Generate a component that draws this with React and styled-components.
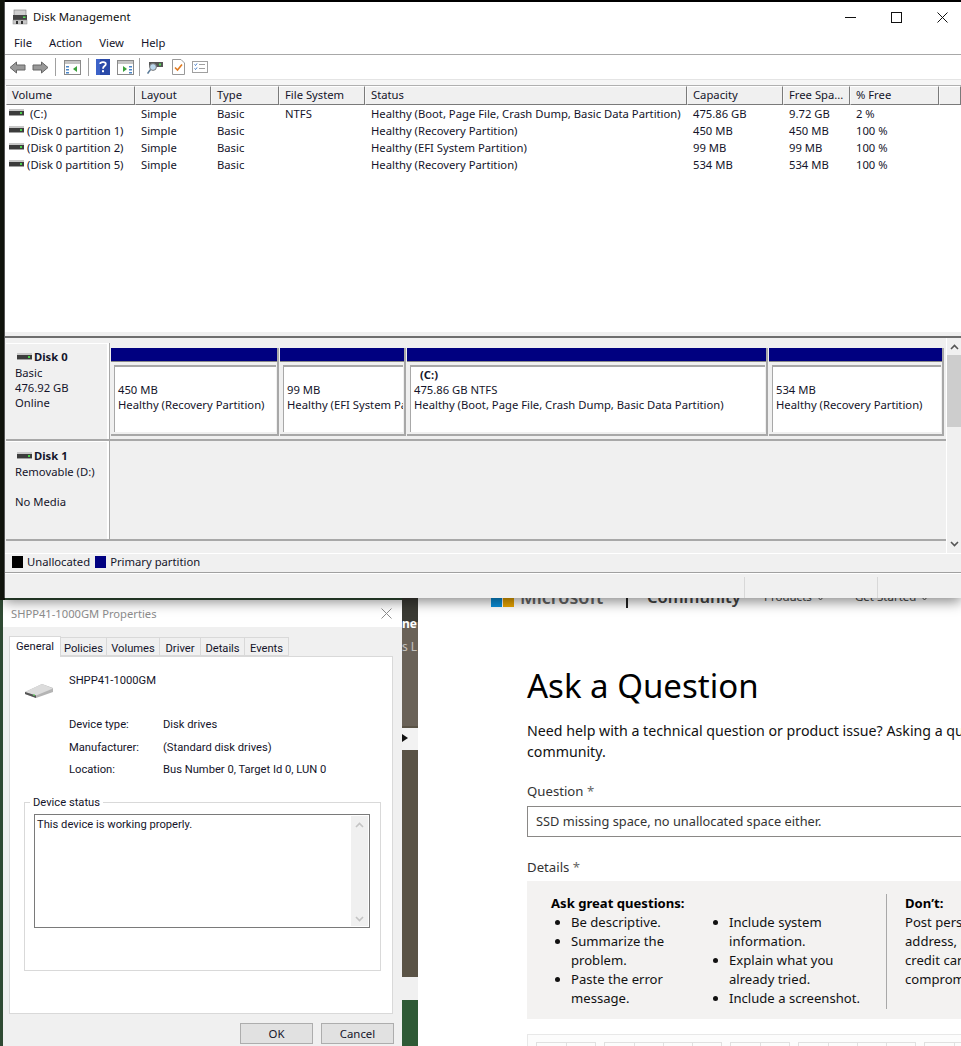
import styled, { createGlobalStyle } from 'styled-components';

const Global = createGlobalStyle`
    html, body { margin: 0; padding: 0; background: #2c3d2c; }
    * { box-sizing: border-box; }
`;

const Desktop = styled.div`
    position: relative;
    width: 961px;
    height: 1046px;
    overflow: hidden;
    background: #2f4a33;
    font-family: "Noto Sans", sans-serif;
    color: #1a1a2a;
`;

const TopStrip = styled.div`
    position: absolute;
    inset: 0 0 auto 0;
    height: 3px;
    background: #000;
`;

const LeftStrip = styled.div`
    position: absolute;
    left: 0;
    top: 0;
    width: 5px;
    height: 600px;
    background: #14180f;
`;

const Photo = styled.div`
    position: absolute;
    left: 402px;
    top: 598px;
    width: 16px;
    height: 448px;
    background: #5a5346;
    color: #fff;
    overflow: hidden;
    font-size: 12px;
`;

const PhotoLabel = styled.span`
    position: absolute;
    left: 0;
    top: ${(p) => p.$top}px;
    font-weight: ${(p) => (p.$bold ? 700 : 400)};
    opacity: ${(p) => (p.$bold ? 1 : 0.6)};
    white-space: nowrap;
`;

const PhotoBand = styled.div`
    position: absolute;
    left: 0;
    right: 0;
    top: ${(p) => p.$top}px;
    height: ${(p) => p.$height}px;
    background: ${(p) => p.$color};
`;

const PhotoArrow = styled.div`
    position: absolute;
    left: 0;
    top: 136px;
    border-left: 6px solid #111;
    border-top: 4px solid transparent;
    border-bottom: 4px solid transparent;
`;

/* disk management window */
const MainWindow = styled.div`
    position: absolute;
    left: 4px;
    top: 2px;
    width: 957px;
    height: 596px;
    background: #fff;
    display: flex;
    flex-direction: column;
    border-left: 1px solid #555;
    box-shadow: 0 4px 12px rgba(0, 0, 0, 0.45);
    font-size: 11.25px;
    z-index: 3;
`;

const TitleBar = styled.div`
    height: 31px;
    display: flex;
    align-items: center;
    flex-shrink: 0;
    padding: 0 0 1px 7px;
    margin-right: -4px;
`;

const TitleText = styled.span`
    color: #111;
    flex: 1;
    margin-left: 5px;
    font-size: 11.4px;
    position: relative;
    top: -1px;
`;

const WinButton = styled.div`
    width: 46px;
    height: 30px;
    display: flex;
    align-items: center;
    justify-content: center;
`;

const MenuBar = styled.div`
    height: 22px;
    flex-shrink: 0;
    display: flex;
    align-items: center;
    gap: 17px;
    padding: 0 0 3px 9px;
    border-bottom: 1px solid #a8a8a8;
    color: #14142a;
`;

const Toolbar = styled.div`
    height: 24px;
    flex-shrink: 0;
    display: flex;
    align-items: center;
    padding-left: 1px;
`;

const ToolButton = styled.div`
    width: ${(p) => p.$w || 22}px;
    height: 20px;
    display: flex;
    align-items: center;
    justify-content: center;
`;

const ToolSep = styled.div`
    width: 1px;
    height: 18px;
    margin: 0 3px;
    background: #a0a0a0;
`;

const ToolGap = styled.div`
    height: 6px;
    flex-shrink: 0;
    background: #f6f6f6;
    border-top: 1px solid #e4e4e4;
`;

const ListPane = styled.div`
    height: 246px;
    flex-shrink: 0;
    margin-left: 1px;
    background: #fff;
    border-top: 1px solid #b0b0b0;
`;

const columns = '129px 76px 68px 86px 322px 96px 67px 89px 1fr';

const HeaderRow = styled.div`
    display: grid;
    grid-template-columns: ${columns};
    height: 19px;
`;

const HeaderCell = styled.div`
    background: #f0f0f0;
    border: 1px solid;
    border-color: #fff #7a7a7a #7a7a7a #f8f8f8;
    padding-left: 5px;
    line-height: 16px;
    white-space: nowrap;
    overflow: hidden;
    color: #14142a;
`;

const ListRow = styled.div`
    display: grid;
    grid-template-columns: ${columns};
    height: 17px;
    line-height: 17px;
    color: #14142a;
    &:first-of-type { margin-top: 1px; }
`;

const ListCell = styled.div`
    padding-left: 6px;
    white-space: nowrap;
    overflow: hidden;
`;

const VolumeCell = styled(ListCell)`
    display: flex;
    align-items: flex-start;
    gap: 3px;
    padding-left: 3px;
    white-space: pre;
    svg { margin-top: 3px; }
`;

const Splitter = styled.div`
    height: 7px;
    flex-shrink: 0;
    background: #f0f0f0;
    border-top: 1px solid #fff;
    border-bottom: 2px solid #6e6e6e;
`;

const GraphPane = styled.div`
    height: 215px;
    flex-shrink: 0;
    background: #f0f0f0;
    display: flex;
    color: #14142a;
`;

const DiskList = styled.div`
    flex: 1;
    padding: 5px 0 0 1px;
    display: flex;
    flex-direction: column;
`;

const DiskRow = styled.div`
    display: flex;
    height: ${(p) => p.$h}px;
    border-bottom: 2px solid #a8a8a8;
`;

const DiskInfo = styled.div`
    width: 103px;
    flex-shrink: 0;
    padding: ${(p) => p.$pad}px 0 0 9px;
    line-height: 15px;
    border-right: 2px solid #fff;
    border-top: 1px solid #fff;
    box-shadow: 1px 0 0 #a8a8a8;
`;

const DiskName = styled.div`
    display: flex;
    align-items: center;
    gap: 2px;
    font-weight: 700;
    margin: -1px 0 1px 2px;
    height: 16px;
`;

const InfoLine = styled.div`
    min-height: 15px;
    white-space: nowrap;
`;

const Partitions = styled.div`
    flex: 1;
    display: flex;
    gap: 1px;
    padding: 5px 2px 0 2px;
`;

const Partition = styled.div`
    width: ${(p) => p.$w}px;
    flex-shrink: 0;
    height: 88px;
    display: flex;
    flex-direction: column;
    background: #f0f0f0;
    border-right: 2px solid #a8a8a8;
    border-bottom: 2px solid #a8a8a8;
`;

const PartitionHead = styled.div`
    height: 14px;
    background: #000080;
    border-bottom: 1px solid #888;
`;

const PartitionBody = styled.div`
    flex: 1;
    margin: 3px 1px 2px 3px;
    background: #fff;
    border-top: 2px solid #a8a8a8;
    border-left: 1px solid #a8a8a8;
    padding: ${(p) => (p.$named ? 0 : 15)}px 0 0 3px;
    line-height: 15px;
    overflow: hidden;
    white-space: nowrap;
`;

const PartitionName = styled.div`
    font-weight: 700;
    padding-left: 6px;
    height: 15px;
`;

const ScrollBar = styled.div`
    width: 15px;
    flex-shrink: 0;
    display: flex;
    flex-direction: column;
    align-items: center;
    background: #f0f0f0;
    padding: 6px 0 6px;
    border-left: 1px solid #fff;
`;

const ScrollThumb = styled.div`
    width: 100%;
    height: 72px;
    margin-top: 5px;
    background: #cdcdcd;
`;

const ScrollSpacer = styled.div`
    flex: 1;
`;

const Legend = styled.div`
    height: 20px;
    flex-shrink: 0;
    background: #f0f0f0;
    border-top: 1px solid #fff;
    border-bottom: 1px solid #a0a0a0;
    display: flex;
    align-items: center;
    padding: 0 0 3px 7px;
    color: #14142a;
`;

const Swatch = styled.span`
    width: 11px;
    height: 12px;
    margin-right: 4px;
    background: ${(p) => p.$color};
`;

const LegendLabel = styled.span`
    margin-right: 5px;
`;

const StatusBar = styled.div`
    flex: 1;
    background: #f0f0f0;
    border-top: 1px solid #fff;
    display: grid;
    grid-template-columns: 740px 133px 1fr;
    padding-top: 3px;
`;

const StatusCell = styled.div`
    border-right: 1px solid #d8d8d8;
    &:last-child { border-right: 0; }
`;

/* device properties dialog */
const Dialog = styled.div`
    position: absolute;
    left: 3px;
    top: 600px;
    width: 399px;
    height: 446px;
    background: #f0f0f0;
    display: flex;
    flex-direction: column;
    font-family: Roboto, sans-serif;
    font-size: 11.2px;
    color: #14142a;
    z-index: 2;
`;

const DialogTitle = styled.div`
    height: 27px;
    margin-bottom: 2px;
    background: #fff;
    display: flex;
    align-items: center;
    justify-content: space-between;
    padding: 0 10px 0 8px;
    color: #8c8c8c;
    font-family: "Noto Sans", sans-serif;
    font-size: 11.2px;
    flex-shrink: 0;
`;

const TabRow = styled.div`
    display: flex;
    align-items: flex-end;
    height: 27px;
    padding-left: 6px;
    flex-shrink: 0;
`;

const Tab = styled.div`
    width: ${(p) => p.$w}px;
    height: ${(p) => (p.$active ? 21 : 19)}px;
    text-align: center;
    line-height: ${(p) => (p.$active ? 19 : 21)}px;
    background: ${(p) => (p.$active ? '#fff' : '#f0f0f0')};
    border: 1px solid #d9d9d9;
    border-bottom: ${(p) => (p.$active ? '0' : '1px solid #d9d9d9')};
    border-left: ${(p) => (p.$active ? '1px solid #d9d9d9' : '0')};
    margin-bottom: ${(p) => (p.$active ? -1 : 0)}px;
    position: relative;
`;

const TabPanel = styled.div`
    height: 358px;
    margin: 0 9px 0 6px;
    background: #fff;
    border: 1px solid #d9d9d9;
    padding: 14px 11px 0 14px;
    flex-shrink: 0;
`;

const DeviceHead = styled.div`
    display: flex;
    height: 46px;
`;

const DeviceIcon = styled.div`
    width: 45px;
    padding-top: 12px;
`;

const DeviceName = styled.div`
    line-height: 15px;
    margin-top: 2px;
`;

const DeviceProps = styled.div`
    display: grid;
    grid-template-columns: 94px 1fr;
    grid-auto-rows: 22.5px;
    margin: 0 0 0 45px;
    line-height: 15px;
`;

const StatusGroup = styled.fieldset`
    margin: 11px 0 0 0;
    padding: 0 10px 0 9px;
    height: 175px;
    border: 1px solid #d9d9d9;
    width: 357px;
`;

const StatusLegend = styled.legend`
    padding: 0 3px;
    margin-left: -4px;
    line-height: 14px;
`;

const StatusBox = styled.div`
    height: 114px;
    margin-top: 4px;
    border: 1px solid #7a7a7a;
    padding: 3px 0 0 2px;
    display: flex;
    justify-content: space-between;
    line-height: 14px;
`;

const BoxScroll = styled.div`
    width: 17px;
    margin: -2px 1px 1px 0;
    background: #f0f0f0;
    display: flex;
    flex-direction: column;
    justify-content: space-between;
    align-items: center;
    padding: 6px 0 4px;
`;

const DialogButtons = styled.div`
    display: flex;
    justify-content: flex-end;
    gap: 8px;
    padding: 9px 8px 0 0;
`;

const DialogButton = styled.div`
    width: 73px;
    height: 21px;
    background: #e1e1e1;
    border: 1px solid #adadad;
    text-align: center;
    line-height: 20px;
    font-family: "Noto Sans", sans-serif;
    font-size: 11.4px;
`;

/* community page behind */
const Page = styled.div`
    position: absolute;
    left: 418px;
    top: 586px;
    width: 543px;
    height: 460px;
    background: #fff;
    overflow: hidden;
    color: #111;
    font-family: "Noto Sans", sans-serif;
    z-index: 1;
`;

const SiteHeader = styled.div`
    height: 24px;
    display: flex;
    align-items: flex-end;
    padding-left: 73px;
    color: #444;
`;

const LogoMark = styled.div`
    display: flex;
    gap: 1px;
    align-self: flex-end;
    margin-bottom: 3px;
`;

const LogoPiece = styled.span`
    width: 11px;
    height: 11px;
    background: ${(p) => p.$color};
`;

const LogoText = styled.span`
    font-size: 18px;
    font-weight: 600;
    line-height: 24px;
    margin-left: 6px;
    width: 106px;
    color: #666;
    position: relative;
    top: -1px;
`;

const HeaderDivider = styled.span`
    width: 2px;
    height: 24px;
    background: #222;
    margin-right: 19px;
    position: relative;
    top: -2px;
`;

const CommunityText = styled.span`
    font-size: 16.5px;
    font-weight: 600;
    width: 117px;
    line-height: 24px;
    position: relative;
    top: -1px;
`;

const NavItem = styled.span`
    font-size: 11.5px;
    line-height: 24px;
    width: ${(p) => p.$w}px;
    display: flex;
    align-items: center;
    gap: 2px;
    position: relative;
    top: -1px;
`;

const PageBody = styled.div`
    padding: 54px 0 0 109px;
`;

const PageTitle = styled.h1`
    margin: 0;
    font-size: 33px;
    font-weight: 400;
    line-height: 44px;
    white-space: nowrap;
    color: #000;
`;

const Intro = styled.p`
    margin: 12px 0 0;
    width: 635px;
    font-size: 14.2px;
    line-height: 21px;
`;

const FieldLabel = styled.div`
    font-size: 13.2px;
    line-height: 18px;
    color: #333;
    margin-top: ${(p) => p.$top}px;
`;

const Required = styled.span`
    color: #666;
`;

const QuestionInput = styled.div`
    margin-top: 6px;
    width: 600px;
    height: 31px;
    border: 1px solid #8a8886;
    padding-left: 8px;
    font-size: 12.8px;
    line-height: 29px;
    color: #333;
`;

const Tips = styled.div`
    margin-top: 5px;
    width: 560px;
    height: 138px;
    background: #f3f2f1;
    display: flex;
    padding: 13px 0 0 24px;
    font-size: 13.1px;
    line-height: 19px;
`;

const TipsBlock = styled.div`
    width: 336px;
    height: 115px;
    border-right: 1px solid #a8a8a8;
    flex-shrink: 0;
`;

const TipsHeading = styled.div`
    font-weight: 700;
    color: #000;
`;

const TipsColumns = styled.div`
    display: grid;
    grid-template-columns: 158px 160px;
`;

const TipsList = styled.ul`
    margin: 0;
    padding: 0 0 0 20px;
`;

const DontBlock = styled.div`
    padding-left: 18px;
    white-space: nowrap;
`;

const Highlight = styled.span`
    color: #c8801e;
`;

const EditorBar = styled.div`
    margin-top: 15px;
    width: 560px;
    height: 30px;
    background: #fcfcfc;
    border: 1px solid #e8e8e8;
    padding: 7px 0 0 8px;
    display: flex;
    gap: 8px;
`;

const EditorGroup = styled.div`
    display: flex;
    height: 20px;
    border: 1px solid #e0e0e0;
`;

const EditorCell = styled.span`
    width: 29px;
    border-left: 1px solid #e0e0e0;
    &:first-child { border-left: 0; }
`;

const DiskGlyph = ({ w = 15 }) => (
    <svg width={w} height="9" viewBox="0 0 15 9">
        <rect x="0" y="1" width="15" height="2" fill="#c8c8c8" />
        <rect x="0" y="3" width="15" height="4" fill="#3c3c3c" />
        <rect x="0" y="7" width="15" height="1" fill="#a0a0a0" />
        <rect x="11" y="4" width="2" height="2" fill="#4ad04a" />
    </svg>
);

const AppGlyph = () => (
    <svg width="16" height="16" viewBox="0 0 16 16">
        <rect x="2" y="1" width="12" height="6" fill="#d0d0d0" stroke="#777" strokeWidth="0.6" />
        <rect x="1" y="6" width="14" height="5" fill="#444" />
        <rect x="11" y="7.5" width="2.5" height="1.5" fill="#5ae05a" />
        <rect x="1" y="11" width="14" height="4" fill="#c8c8c8" stroke="#888" strokeWidth="0.5" />
        <rect x="4" y="12" width="2" height="3" fill="#333" />
        <rect x="9" y="12" width="2" height="3" fill="#333" />
    </svg>
);

const ArrowGlyph = ({ flip }) => (
    <svg width="17" height="13" viewBox="0 0 17 13" style={flip ? { transform: 'scaleX(-1)' } : undefined}>
        <path d="M1 6.5 L7.5 1 V4 H16 V9 H7.5 V12 Z" fill="#999" stroke="#666" strokeWidth="1" />
    </svg>
);

const PanelGlyph = ({ mirror }) => (
    <svg width="17" height="15" viewBox="0 0 17 15">
        <rect x="0.5" y="0.5" width="16" height="14" fill="#fff" stroke="#8a8a8a" />
        <rect x="1" y="1" width="15" height="3" fill="#c4c4c4" />
        {[6, 9, 12].map((y) => (
            <rect key={y} x={mirror ? 12 : 2} y={y} width="3" height="1.5" fill="#4a86c8" />
        ))}
        {mirror ? (
            <path d="M6 6 L10 9 L6 12 Z" fill="#3aa03a" />
        ) : (
            <path d="M13 6 L9 9 L13 12 Z" fill="#3aa03a" />
        )}
    </svg>
);

const HelpGlyph = () => (
    <svg width="14" height="16" viewBox="0 0 14 16">
        <rect width="14" height="16" fill="#2a4aa8" />
        <rect x="0" y="0" width="4" height="16" fill="#3c62c8" />
        <path d="M4.2 5 C4.2 2.4 9.8 2.4 9.8 5 C9.8 7.2 7 7 7 9.8" fill="none" stroke="#fff" strokeWidth="1.8" />
        <rect x="6" y="11.2" width="2" height="2" fill="#fff" />
    </svg>
);

const RescanGlyph = () => (
    <svg width="17" height="15" viewBox="0 0 17 15">
        <rect x="2" y="2" width="14" height="5" fill="#555" />
        <rect x="12" y="3.5" width="2" height="2" fill="#5ae05a" />
        <circle cx="6" cy="7" r="3.4" fill="#bcd8ee" stroke="#777" />
        <path d="M3.4 9.6 L0.6 13.6" stroke="#5a7a98" strokeWidth="1.6" />
    </svg>
);

const CheckDocGlyph = () => (
    <svg width="13" height="16" viewBox="0 0 13 16">
        <path d="M0.5 0.5 H9 L12.5 4 V15.5 H0.5 Z" fill="#fff" stroke="#999" />
        <path d="M3 8.5 L5.5 11 L10 5.5" fill="none" stroke="#e07a20" strokeWidth="1.6" />
    </svg>
);

const ChecklistGlyph = () => (
    <svg width="16" height="12" viewBox="0 0 16 12">
        <rect x="0.5" y="0.5" width="15" height="11" fill="#fff" stroke="#a0a0a0" />
        <path d="M2.5 3.5 L3.5 4.5 L5 2.5 M2.5 7.5 L3.5 8.5 L5 6.5" fill="none" stroke="#3c78c8" />
        <path d="M7 3.5 H13 M7 7.5 H13" stroke="#a0a0a0" />
    </svg>
);

const Chevron = ({ up, color = '#555' }) => (
    <svg width="9" height="6" viewBox="0 0 9 6">
        <path d={up ? 'M1 5 L4.5 1.5 L8 5' : 'M1 1 L4.5 4.5 L8 1'} fill="none" stroke={color} strokeWidth="1.6" />
    </svg>
);

const NavChevron = () => (
    <svg width="13" height="8" viewBox="0 0 13 8">
        <path d="M1 1 L6.5 7 L12 1" fill="none" stroke="#555" strokeWidth="1" />
    </svg>
);

const CloseGlyph = ({ size = 11, color = '#111' }) => (
    <svg width={size} height={size} viewBox="0 0 11 11">
        <path d="M0.5 0.5 L10.5 10.5 M10.5 0.5 L0.5 10.5" stroke={color} strokeWidth="1" />
    </svg>
);

const DriveGlyph = () => (
    <svg width="30" height="16" viewBox="0 0 30 16">
        <path d="M1 9 L18 1 L29 5 L29 9 L12 15 L1 11 Z" fill="#b4b4b4" />
        <path d="M1 9 L12 12.5 L29 5.5 L18 1 Z" fill="#dcdcdc" />
        <path d="M1 9 L12 12.5 V15 L1 11 Z" fill="#555" />
        <rect x="9" y="11.5" width="2" height="1.2" fill="#60d060" />
    </svg>
);

const rows = [
    ['\u00a0(C:)', 'Simple', 'Basic', 'NTFS', 'Healthy (Boot, Page File, Crash Dump, Basic Data Partition)', '475.86 GB', '9.72 GB', '2 %'],
    ['(Disk 0 partition 1)', 'Simple', 'Basic', '', 'Healthy (Recovery Partition)', '450 MB', '450 MB', '100 %'],
    ['(Disk 0 partition 2)', 'Simple', 'Basic', '', 'Healthy (EFI System Partition)', '99 MB', '99 MB', '100 %'],
    ['(Disk 0 partition 5)', 'Simple', 'Basic', '', 'Healthy (Recovery Partition)', '534 MB', '534 MB', '100 %'],
];

const headers = ['Volume', 'Layout', 'Type', 'File System', 'Status', 'Capacity', 'Free Spa...', '% Free', ''];

const partitions = [
    { w: 168, size: '450 MB', status: 'Healthy (Recovery Partition)' },
    { w: 126, size: '99 MB', status: 'Healthy (EFI System Partition)' },
    { w: 361, name: '(C:)', size: '475.86 GB NTFS', status: 'Healthy (Boot, Page File, Crash Dump, Basic Data Partition)' },
    { w: 175, size: '534 MB', status: 'Healthy (Recovery Partition)' },
];

const tabs = [['Policies', 46], ['Volumes', 53], ['Driver', 41], ['Details', 44], ['Events', 44]];

export default function App() {
    return (
        <Desktop>
            <Global />
            <TopStrip />
            <LeftStrip />
            <Photo>
                <PhotoBand $top={0} $height={24} $color="#3a3a34" />
                <PhotoBand $top={24} $height={104} $color="#6a6258" />
                <PhotoBand $top={130} $height={22} $color="#f2f2f2" />
                <PhotoBand $top={379} $height={23} $color="#f0f0f0" />
                <PhotoBand $top={402} $height={46} $color="#2f5a36" />
                <PhotoLabel $top={17} $bold>ne (</PhotoLabel>
                <PhotoLabel $top={40}>s L</PhotoLabel>
                <PhotoArrow />
            </Photo>

            <MainWindow>
                <TitleBar>
                    <AppGlyph />
                    <TitleText>Disk Management</TitleText>
                    <WinButton>
                        <svg width="11" height="11" viewBox="0 0 11 11"><path d="M0 5.5 H11" stroke="#111" /></svg>
                    </WinButton>
                    <WinButton>
                        <svg width="11" height="11" viewBox="0 0 11 11"><rect x="0.5" y="0.5" width="10" height="10" fill="none" stroke="#111" /></svg>
                    </WinButton>
                    <WinButton><CloseGlyph /></WinButton>
                </TitleBar>
                <MenuBar>
                    <span>File</span>
                    <span>Action</span>
                    <span>View</span>
                    <span>Help</span>
                </MenuBar>
                <Toolbar>
                    <ToolButton><ArrowGlyph /></ToolButton>
                    <ToolButton $w={24}><ArrowGlyph flip /></ToolButton>
                    <ToolSep />
                    <ToolButton $w={26}><PanelGlyph /></ToolButton>
                    <ToolSep />
                    <ToolButton><HelpGlyph /></ToolButton>
                    <ToolButton><PanelGlyph mirror /></ToolButton>
                    <ToolSep />
                    <ToolButton $w={24}><RescanGlyph /></ToolButton>
                    <ToolButton><CheckDocGlyph /></ToolButton>
                    <ToolButton><ChecklistGlyph /></ToolButton>
                </Toolbar>
                <ToolGap />
                <ListPane>
                    <HeaderRow>
                        {headers.map((h, i) => <HeaderCell key={i}>{h}</HeaderCell>)}
                    </HeaderRow>
                    {rows.map((r) => (
                        <ListRow key={r[0]}>
                            <VolumeCell><DiskGlyph />{r[0]}</VolumeCell>
                            {r.slice(1).map((c, i) => <ListCell key={i}>{c}</ListCell>)}
                        </ListRow>
                    ))}
                </ListPane>
                <Splitter />
                <GraphPane>
                    <DiskList>
                        <DiskRow $h={98}>
                            <DiskInfo $pad={5}>
                                <DiskName><DiskGlyph />Disk 0</DiskName>
                                <InfoLine>Basic</InfoLine>
                                <InfoLine>476.92 GB</InfoLine>
                                <InfoLine>Online</InfoLine>
                            </DiskInfo>
                            <Partitions>
                                {partitions.map((p) => (
                                    <Partition key={p.size} $w={p.w}>
                                        <PartitionHead />
                                        <PartitionBody $named={!!p.name}>
                                            {p.name && <PartitionName>{p.name}</PartitionName>}
                                            <div>{p.size}</div>
                                            <div>{p.status}</div>
                                        </PartitionBody>
                                    </Partition>
                                ))}
                            </Partitions>
                        </DiskRow>
                        <DiskRow $h={100}>
                            <DiskInfo $pad={6}>
                                <DiskName><DiskGlyph />Disk 1</DiskName>
                                <InfoLine>Removable (D:)</InfoLine>
                                <InfoLine />
                                <InfoLine>No Media</InfoLine>
                            </DiskInfo>
                        </DiskRow>
                    </DiskList>
                    <ScrollBar>
                        <Chevron up />
                        <ScrollThumb />
                        <ScrollSpacer />
                        <Chevron />
                    </ScrollBar>
                </GraphPane>
                <Legend>
                    <Swatch $color="#000" />
                    <LegendLabel>Unallocated</LegendLabel>
                    <Swatch $color="#000080" />
                    <LegendLabel>Primary partition</LegendLabel>
                </Legend>
                <StatusBar>
                    <StatusCell />
                    <StatusCell />
                    <StatusCell />
                </StatusBar>
            </MainWindow>

            <Dialog>
                <DialogTitle>
                    <span>SHPP41-1000GM Properties</span>
                    <CloseGlyph color="#8c8c8c" />
                </DialogTitle>
                <TabRow>
                    <Tab $active $w={52}>General</Tab>
                    {tabs.map(([label, w]) => <Tab key={label} $w={w}>{label}</Tab>)}
                </TabRow>
                <TabPanel>
                    <DeviceHead>
                        <DeviceIcon><DriveGlyph /></DeviceIcon>
                        <DeviceName>SHPP41-1000GM</DeviceName>
                    </DeviceHead>
                    <DeviceProps>
                        <span>Device type:</span><span>Disk drives</span>
                        <span>Manufacturer:</span><span>(Standard disk drives)</span>
                        <span>Location:</span><span>Bus Number 0, Target Id 0, LUN 0</span>
                    </DeviceProps>
                    <StatusGroup>
                        <StatusLegend>Device status</StatusLegend>
                        <StatusBox>
                            <span>This device is working properly.</span>
                            <BoxScroll>
                                <Chevron up color="#c4c4c4" />
                                <Chevron color="#c4c4c4" />
                            </BoxScroll>
                        </StatusBox>
                    </StatusGroup>
                </TabPanel>
                <DialogButtons>
                    <DialogButton>OK</DialogButton>
                    <DialogButton>Cancel</DialogButton>
                </DialogButtons>
            </Dialog>

            <Page>
                <SiteHeader>
                    <LogoMark>
                        <LogoPiece $color="#0a8ed8" />
                        <LogoPiece $color="#e8a400" />
                    </LogoMark>
                    <LogoText>Microsoft</LogoText>
                    <HeaderDivider />
                    <CommunityText>Community</CommunityText>
                    <NavItem $w={91}>Products<NavChevron /></NavItem>
                    <NavItem $w={90}>Get Started<NavChevron /></NavItem>
                </SiteHeader>
                <PageBody>
                    <PageTitle>Ask a Question</PageTitle>
                    <Intro>Need help with a technical question or product issue? Asking a question here will reach the community.</Intro>
                    <FieldLabel $top={20}>Question <Required>*</Required></FieldLabel>
                    <QuestionInput>SSD missing space, no unallocated space either.</QuestionInput>
                    <FieldLabel $top={21}>Details <Required>*</Required></FieldLabel>
                    <Tips>
                        <TipsBlock>
                            <TipsHeading>Ask great questions:</TipsHeading>
                            <TipsColumns>
                                <TipsList>
                                    <li>Be descriptive.</li>
                                    <li>Summarize the problem.</li>
                                    <li>Paste the error message.</li>
                                </TipsList>
                                <TipsList>
                                    <li>Include system information.</li>
                                    <li>Explain what you already tried.</li>
                                    <li>Include a screenshot.</li>
                                </TipsList>
                            </TipsColumns>
                        </TipsBlock>
                        <DontBlock>
                            <TipsHeading>Don’t:</TipsHeading>
                            <div>Post personal</div>
                            <div>address, <Highlight>phone</Highlight></div>
                            <div>credit card</div>
                            <div>compromise</div>
                        </DontBlock>
                    </Tips>
                    <EditorBar>
                        {[2, 4, 2, 4, 2].map((n, i) => (
                            <EditorGroup key={i}>
                                {Array.from({ length: n }, (_, c) => <EditorCell key={c} />)}
                            </EditorGroup>
                        ))}
                    </EditorBar>
                </PageBody>
            </Page>
        </Desktop>
    );
}
